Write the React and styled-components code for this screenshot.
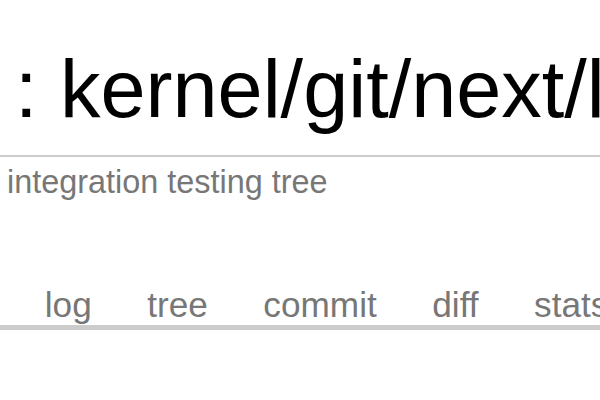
import React from "react";
import styled, { createGlobalStyle } from "styled-components";

const Global = createGlobalStyle`
  html, body {
    margin: 0;
    padding: 0;
    background: #fff;
    overflow: hidden;
  }
  body {
    font-family: "Liberation Sans", Arial, sans-serif;
  }
`;

const Page = styled.div`
  width: 600px;
  height: 400px;
  overflow: hidden;
  display: flex;
  flex-direction: column;
`;

const Header = styled.header`
  display: flex;
  flex-direction: column;
`;

const Title = styled.div`
  font-size: 81px;
  line-height: 80px;
  color: #000;
  white-space: nowrap;
  padding: 49px 0 26px 15px;
`;

const Sub = styled.div`
  border-top: 2px solid #ccc;
  color: #777;
  font-size: 32.4px;
  line-height: 32px;
  white-space: nowrap;
  padding: 9px 0 0 7px;
`;

const Tabs = styled.nav`
  margin-top: 89px;
  display: flex;
  border-bottom: 5px solid #ccc;
  padding-left: 17px;
  white-space: nowrap;
`;

const Tab = styled.a`
  font-size: 35.2px;
  line-height: 35.2px;
  color: ${(p) => (p.$active ? "#000" : "#777")};
  background: ${(p) => (p.$active ? "#ccc" : "transparent")};
  padding: 0 27.75px 2.6px;
  text-decoration: none;
`;

export default function App() {
  const tabs = ["log", "tree", "commit", "diff", "stats"];
  return (
    <Page>
      <Global />
      <Header>
        <Title>: kernel/git/next/linux-next.git</Title>
        <Sub>integration testing tree</Sub>
      </Header>
      <Tabs>
        {tabs.map((t) => (
          <Tab key={t} href="#">
            {t}
          </Tab>
        ))}
      </Tabs>
    </Page>
  );
}
